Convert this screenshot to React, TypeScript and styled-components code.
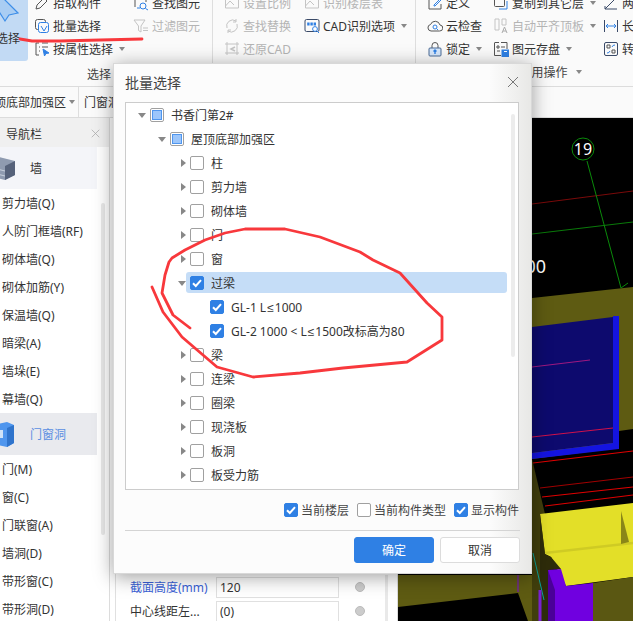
import React from "react"
import styled, { createGlobalStyle } from "styled-components"

const GlobalStyle = createGlobalStyle`
  html, body {
    margin: 0;
    padding: 0;
    background: #fff;
  }
  body {
    font-family: "Noto Sans", "Noto Sans CJK SC", sans-serif;
    font-size: 12px;
    color: #333;
  }
`

const Page = styled.div`
  position: relative;
  width: 633px;
  height: 621px;
  overflow: hidden;
  background: #fff;
`

const Ribbon = styled.header`
  display: flex;
  height: 87px;
  background: #fafafa;
  border-bottom: 1px solid #dcdcdc;
  box-sizing: border-box;
`

const Group = styled.section<{ $width: number }>`
  display: flex;
  flex-direction: column;
  flex: none;
  width: ${p => p.$width}px;
  height: 86px;
  box-sizing: border-box;
  border-right: 1px solid #dedede;
  overflow: hidden;
  &:last-child {
    border-right: 0;
  }
`

const GroupBody = styled.div`
  display: flex;
  height: 62px;
`

const GroupLabel = styled.div<{ $start?: number; $end?: number; $top?: number }>`
  display: flex;
  align-items: center;
  justify-content: center;
  gap: 6px;
  margin-top: ${p => p.$top ?? 3}px;
  padding-left: ${p => p.$start ?? 0}px;
  padding-right: ${p => p.$end ?? 0}px;
  height: 18px;
  color: #444;
`

const BigButton = styled.button`
  flex: none;
  width: 28px;
  height: 61px;
  margin: 0;
  padding: 0;
  border: 0;
  border-radius: 0 0 3px 0;
  background: #c2daf4;
  color: #333;
  font: inherit;
  overflow: hidden;
  display: flex;
  flex-direction: column;
  align-items: flex-start;
`

const BigIcon = styled.svg`
  flex: none;
  overflow: visible;
`

const BigLabel = styled.span`
  margin: 7px 0 0 -4px;
  white-space: nowrap;
`

const ToolColumn = styled.div<{ $left: number; $width: number }>`
  flex: none;
  width: ${p => p.$width}px;
  margin-left: ${p => p.$left}px;
  margin-top: -9px;
`

const Tool = styled.div<{ $off?: boolean }>`
  display: flex;
  align-items: center;
  gap: 3px;
  height: 23px;
  white-space: nowrap;
  color: ${p => (p.$off ? "#b4b4b4" : "#333")};
`

const Caret = styled.i<{ $gap?: number }>`
  display: inline-block;
  width: 0;
  height: 0;
  margin-left: ${p => p.$gap ?? 3}px;
  border-left: 3px solid transparent;
  border-right: 3px solid transparent;
  border-top: 4px solid #888;
`

const SubBar = styled.div`
  display: flex;
  align-items: center;
  height: 31px;
  box-sizing: border-box;
  background: #fafafa;
  border-bottom: 1px solid #dcdcdc;
  overflow: hidden;
`

const FloorPicker = styled.div`
  display: flex;
  align-items: center;
  flex: none;
  width: 79px;
  height: 100%;
  box-sizing: border-box;
  margin-right: 5px;
  border-right: 1px solid #dedede;
  overflow: hidden;
  white-space: nowrap;
`

const FloorName = styled.span`
  margin-left: -18px;
`

const Main = styled.div`
  display: flex;
  height: 503px;
`

const Nav = styled.nav`
  position: relative;
  flex: none;
  width: 110px;
  box-sizing: border-box;
  background: #fff;
  border-right: 1px solid #dcdcdc;
  overflow: hidden;
`

const NavHead = styled.div`
  display: flex;
  align-items: center;
  justify-content: space-between;
  height: 29px;
  padding: 2px 9px 0 6px;
  box-sizing: border-box;
  background: #f0f0f0;
`

const NavCategory = styled.div<{ $active?: boolean }>`
  display: flex;
  align-items: center;
  width: 97px;
  height: 42px;
  background: ${p => (p.$active ? "#e9eaee" : "#f4f5f9")};
  color: ${p => (p.$active ? "#5b8fe2" : "#333")};
  overflow: hidden;
`

const NavIcon = styled.svg`
  flex: none;
  width: 30px;
  height: 26px;
  margin-left: -15px;
  margin-right: 15px;
`

const NavItem = styled.div`
  height: 28px;
  line-height: 30px;
  padding-left: 2px;
  white-space: nowrap;
`

const NavScroll = styled.div`
  position: absolute;
  left: 101px;
  top: 85px;
  width: 4px;
  height: 332px;
  border-radius: 2px;
  background: #e8e8e8;
`

const PropertyPane = styled.aside`
  display: flex;
  flex: none;
  width: 283px;
  margin-left: 5px;
  box-sizing: border-box;
  padding: 457px 0 0 14px;
  background: #fff;
  border-left: 1px solid #e0e0e0;
  border-right: 1px solid #dcdcdc;
`

const PropertyRows = styled.div`
  flex: none;
  width: 255px;
`

const PropertyRow = styled.div`
  display: flex;
  align-items: center;
  height: 24px;
`

const PropertyName = styled.span<{ $blue?: boolean }>`
  flex: none;
  width: 86px;
  white-space: nowrap;
  color: ${p => (p.$blue ? "#3a5fd6" : "#333")};
`

const PropertyValue = styled.div`
  flex: none;
  width: 123px;
  height: 21px;
  line-height: 19px;
  padding-left: 3px;
  box-sizing: border-box;
  border: 1px solid #e0e0e0;
`

const Dot = styled.i`
  flex: none;
  width: 8px;
  height: 8px;
  margin-left: 16px;
  border-radius: 50%;
  background: #ccc;
  border: 1px solid #bbb;
`

const PaneScroll = styled.div`
  flex: none;
  width: 3px;
  height: 46px;
  background: #e9e9e9;
`

const Canvas = styled.div`
  flex: 1;
  background: #000;
  overflow: hidden;
`

const Scene = styled.svg`
  display: block;
  width: 235px;
  height: 503px;
`

const Dialog = styled.div`
  position: absolute;
  left: 113px;
  top: 63px;
  width: 419px;
  height: 511px;
  box-sizing: border-box;
  padding: 0 11px;
  display: flex;
  flex-direction: column;
  background: linear-gradient(90deg, #fcfcfc 0, #fcfcfc 90%, #e8e8e6 100%);
  border: 1px solid #d8d8d8;
  box-shadow: 0 3px 18px rgba(0, 0, 0, 0.38);
`

const DialogHead = styled.div`
  display: flex;
  align-items: center;
  justify-content: space-between;
  flex: none;
  height: 38px;
  box-sizing: border-box;
  padding: 0 1px 2px 0;
  font-size: 14px;
  color: #444;
`

const CloseButton = styled.button`
  display: flex;
  margin: 0;
  padding: 0;
  border: 0;
  background: none;
`

const TreeBox = styled.div`
  position: relative;
  flex: none;
  width: 394px;
  height: 388px;
  box-sizing: border-box;
  background: #fff;
  border: 1px solid #ccc;
`

const TreeRow = styled.div<{ $level: number; $selected?: boolean }>`
  position: relative;
  display: flex;
  align-items: center;
  height: 24px;
  padding-left: ${p => 24 + p.$level * 20}px;
  white-space: nowrap;
  color: #333;
  ${p =>
    p.$selected
      ? `
    &::before {
      content: "";
      position: absolute;
      left: 60px;
      top: 1px;
      width: 321px;
      height: 21px;
      border-radius: 3px;
      background: #c5ddf7;
    }
  `
      : ""}
`

const Arrow = styled.i<{ $open?: boolean }>`
  position: absolute;
  width: 0;
  height: 0;
  ${p =>
    p.$open
      ? `
    margin-left: -12px;
    border-left: 4px solid transparent;
    border-right: 4px solid transparent;
    border-top: 5px solid #888;
  `
      : `
    margin-left: -9px;
    border-top: 4px solid transparent;
    border-bottom: 4px solid transparent;
    border-left: 5px solid #888;
  `}
`

const BoxFace = styled.span<{ $state: CheckState }>`
  position: relative;
  flex: none;
  display: flex;
  align-items: center;
  justify-content: center;
  width: 14px;
  height: 14px;
  box-sizing: border-box;
  border-radius: 2px;
  border: 1px solid ${p => (p.$state === "on" ? "#2f80e4" : "#a0a0a0")};
  background: ${p => (p.$state === "on" ? "#2f80e4" : "#fff")};
`

const MixedFill = styled.i`
  width: 10px;
  height: 10px;
  box-sizing: border-box;
  background: #9cc6fb;
  border: 1px solid #4f96ee;
`

const TreeLabel = styled.span`
  position: relative;
  margin-left: 7px;
`

const LessEqual = styled.span`
  font-family: "Liberation Sans", sans-serif;
  margin: 0 1px;
`

const TreeScroll = styled.div`
  position: absolute;
  left: 385px;
  top: 11px;
  width: 4px;
  height: 243px;
  border-radius: 2px;
  background: #ececec;
`

const Filters = styled.div`
  display: flex;
  align-items: center;
  justify-content: flex-end;
  flex: none;
  height: 40px;
  padding-right: 1px;
`

const FilterItem = styled.label`
  display: flex;
  align-items: center;
  gap: 3px;
  margin-left: 8px;
  white-space: nowrap;
  color: #444;
`

const DialogFoot = styled.div`
  display: flex;
  justify-content: flex-end;
  gap: 6px;
  flex: none;
  padding-top: 6px;
  height: 43px;
  box-sizing: border-box;
  border-top: 1px solid #d4d4d4;
`

const ActionButton = styled.button<{ $primary?: boolean }>`
  width: 80px;
  height: 26px;
  margin: 0;
  padding: 0;
  border-radius: 3px;
  font: inherit;
  border: 1px solid ${p => (p.$primary ? "#2f80e4" : "#dcdcdc")};
  background: ${p => (p.$primary ? "#2f80e4" : "#fff")};
  color: ${p => (p.$primary ? "#fff" : "#333")};
`

const Markup = styled.svg`
  position: absolute;
  left: 0;
  top: 0;
  width: 633px;
  height: 621px;
  pointer-events: none;
`

type CheckState = "on" | "off" | "mixed"

const Check = ({ state }: { state: CheckState }) => (
  <BoxFace $state={state}>
    {state === "on" && (
      <svg width="12" height="12" viewBox="0 0 12 12">
        <path d="M2 6.2 L4.8 9 L10 3.2" fill="none" stroke="#fff" strokeWidth="2" />
      </svg>
    )}
    {state === "mixed" && <MixedFill />}
  </BoxFace>
)

const Ico = ({ children }: { children: React.ReactNode }) => (
  <svg width="16" height="16" viewBox="0 0 16 16" fill="none" stroke="#555" strokeWidth="1" style={{ flex: "none" }}>
    {children}
  </svg>
)

const BLUE = "#2f80e4"
const GREY = "#c4c4c4"

const icons: Record<string, React.ReactNode> = {
  pick: <path d="M2 14 L3 10 L10 3 L13 6 L6 13 Z" />,
  batch: (
    <>
      <rect x="1.5" y="1.5" width="10" height="10" rx="2" />
      <rect x="4.5" y="4.5" width="10" height="10" rx="2" stroke={BLUE} fill="#fafafa" />
      <path d="M7 8 L10 13 L13 8" stroke={BLUE} />
    </>
  ),
  attr: (
    <>
      <path d="M5 2 H2 V14 H5 M8 2 H14 M8 6 H14 M5 6 H6 M5 10 H6" />
      <path d="M9 8 L15 12 L12 12.5 L10.5 15 Z" fill={BLUE} stroke={BLUE} />
    </>
  ),
  find: (
    <>
      <path d="M2 12 V2 H13 V7" />
      <circle cx="10" cy="11" r="3" stroke={BLUE} />
      <path d="M4 13 H7 M12.5 13.5 L15 15" stroke={BLUE} />
    </>
  ),
  filter: (
    <g stroke={GREY}>
      <path d="M1 2 H12 L8 8 V14 L5.5 12.5 V8 Z" />
      <path d="M10 10 H15 M10 12.5 H15" />
    </g>
  ),
  scale: <path d="M1.5 13 V3 H14.5 V13 Z M1.5 11 L6 6 L10 10" stroke={GREY} />,
  replace: (
    <g stroke={GREY}>
      <path d="M3 10 A6 6 0 0 1 12 3" />
      <path d="M13 6 A6 6 0 0 1 4 13" />
      <path d="M12 1 V4 H9 M4 15 V12 H7" />
    </g>
  ),
  restore: (
    <g stroke={GREY}>
      <path d="M3 1 V14 M13 1 V14 M1 3 H15 M1 12 H15" />
      <path d="M11 6 L7 8 L11 10" strokeWidth="1.5" />
    </g>
  ),
  cad: (
    <>
      <rect x="1" y="1.5" width="14" height="12" rx="1.5" stroke="#3a4a68" />
      <path d="M3.2 6 H12.8" stroke={BLUE} strokeWidth="3" strokeDasharray="2.4 .8" />
      <circle cx="11" cy="11" r="2.4" stroke={BLUE} fill="#fff" />
      <path d="M13 13 L15 15" stroke={BLUE} />
    </>
  ),
  define: (
    <>
      <path d="M8 2 H2 V14 H14 V9" />
      <path d="M7 10 L14 3 L15 4 L8 11 H7 Z" stroke={BLUE} />
    </>
  ),
  cloud: (
    <>
      <path d="M4 13 H12.5 A3 3 0 0 0 13 7 A5 5 0 0 0 3.5 6.5 A3.3 3.3 0 0 0 4 13 Z" />
      <circle cx="8" cy="9" r="2" stroke={BLUE} />
      <path d="M9.5 10.5 L11 12" stroke={BLUE} />
    </>
  ),
  lock: (
    <>
      <path d="M5 7 V4.5 A3 3 0 0 1 11 4.5 V7" />
      <rect x="2" y="7" width="12" height="8" rx="1" fill="#d6e7fb" stroke="#4a6a95" />
      <path d="M8 9 V13 M6.5 10.5 L8 9 L9.5 10.5" stroke={BLUE} strokeWidth="1.4" />
    </>
  ),
  copy: (
    <>
      <rect x="1.5" y="1.5" width="10" height="10" rx="1" />
      <path d="M6 14 H14 V6" stroke={BLUE} />
    </>
  ),
  align: (
    <g stroke={GREY}>
      <path d="M2 1 H6 V12 H2 Z M9 1 H13 V7 H9 Z" />
      <path d="M9 15 L11.5 9 L14 15 M10 13 H13" stroke="#aaa" />
    </g>
  ),
  save: (
    <>
      <path d="M8 1.5 H14 V8 M2 1.5 H6 M1.5 1.5 V14.5 H8" />
      <path d="M4 5 H6 V7 H4 Z M8 6 H12 M4 10 H7" />
      <rect x="9" y="9" width="6.5" height="6.5" fill={BLUE} stroke={BLUE} />
      <path d="M11 10.5 H14" stroke="#fff" />
    </>
  ),
  twoPoint: <path d="M2 14 L13 3 M2 14 H14 M2 14 V11" stroke="#3a4a68" />,
  length: (
    <>
      <path d="M1.5 2 V14 M14.5 2 V14" stroke="#3a4a68" />
      <path d="M3 8 H13 M5 6 L3 8 L5 10 M11 6 L13 8 L11 10" stroke={BLUE} />
    </>
  ),
  turn: (
    <>
      <rect x="1.5" y="1.5" width="13" height="13" rx="1.5" stroke="#3a4a68" />
      <path d="M4 4 H7 V7 H4 Z M9 9 H12 V12 H9 Z" />
      <path d="M9 6 A3 3 0 0 1 12 4 M7 10 A3 3 0 0 1 4 12" stroke={BLUE} />
    </>
  ),
}

interface ToolDef {
  icon: string
  label: string
  off?: boolean
  caret?: boolean
}

interface ColumnDef {
  left: number
  width: number
  tools: ToolDef[]
}

const selectColumns: ColumnDef[] = [
  {
    left: 6,
    width: 99,
    tools: [
      { icon: "pick", label: "拾取构件" },
      { icon: "batch", label: "批量选择" },
      { icon: "attr", label: "按属性选择", caret: true },
    ],
  },
  {
    left: 0,
    width: 78,
    tools: [
      { icon: "find", label: "查找图元" },
      { icon: "filter", label: "过滤图元", off: true },
    ],
  },
]

const cadColumns: ColumnDef[] = [
  {
    left: 11,
    width: 80,
    tools: [
      { icon: "scale", label: "设置比例", off: true },
      { icon: "replace", label: "查找替换", off: true },
      { icon: "restore", label: "还原CAD", off: true },
    ],
  },
  {
    left: 0,
    width: 110,
    tools: [
      { icon: "scale", label: "识别楼层表", off: true },
      { icon: "cad", label: "CAD识别选项", caret: true },
    ],
  },
]

const editColumns: ColumnDef[] = [
  {
    left: 11,
    width: 66,
    tools: [
      { icon: "define", label: "定义" },
      { icon: "cloud", label: "云检查" },
      { icon: "lock", label: "锁定", caret: true },
    ],
  },
  {
    left: 0,
    width: 110,
    tools: [
      { icon: "copy", label: "复制到其它层", caret: true },
      { icon: "align", label: "自动平齐顶板", off: true, caret: true },
      { icon: "save", label: "图元存盘", caret: true },
    ],
  },
  {
    left: 0,
    width: 40,
    tools: [
      { icon: "twoPoint", label: "两点" },
      { icon: "length", label: "长度" },
      { icon: "turn", label: "转换" },
    ],
  },
]

const Columns = ({ columns }: { columns: ColumnDef[] }) => (
  <>
    {columns.map(col => (
      <ToolColumn key={col.tools[0].label} $left={col.left} $width={col.width}>
        {col.tools.map(t => (
          <Tool key={t.label} $off={t.off}>
            <Ico>{icons[t.icon]}</Ico>
            {t.label}
            {t.caret && <Caret />}
          </Tool>
        ))}
      </ToolColumn>
    ))}
  </>
)

const wallItems = ["剪力墙(Q)", "人防门框墙(RF)", "砌体墙(Q)", "砌体加筋(Y)", "保温墙(Q)", "暗梁(A)", "墙垛(E)", "幕墙(Q)"]
const openingItems = ["门(M)", "窗(C)", "门联窗(A)", "墙洞(D)", "带形窗(C)", "带形洞(D)"]

interface TreeNode {
  level: number
  label: string
  state: CheckState
  arrow?: "open" | "closed"
  selected?: boolean
}

const closed = (label: string): TreeNode => ({ level: 2, label, state: "off", arrow: "closed" })

const tree: TreeNode[] = [
  { level: 0, label: "书香门第2#", state: "mixed", arrow: "open" },
  { level: 1, label: "屋顶底部加强区", state: "mixed", arrow: "open" },
  closed("柱"),
  closed("剪力墙"),
  closed("砌体墙"),
  closed("门"),
  closed("窗"),
  { level: 2, label: "过梁", state: "on", arrow: "open", selected: true },
  { level: 3, label: "GL-1 L≤1000", state: "on" },
  { level: 3, label: "GL-2 1000 < L≤1500改标高为80", state: "on" },
  closed("梁"),
  closed("连梁"),
  closed("圈梁"),
  closed("现浇板"),
  closed("板洞"),
  closed("板受力筋"),
]

// the CJK fallback draws ≤ too wide, so it gets its own font
const labelParts = (label: string) => {
  const [before, after] = label.split("≤")
  if (after === undefined) return label
  return (
    <>
      {before}
      <LessEqual>≤</LessEqual>
      {after}
    </>
  )
}

const CloseX = ({ size, color }: { size: number; color: string }) => (
  <svg width={size} height={size} viewBox="0 0 12 12">
    <path d="M1 1 L11 11 M11 1 L1 11" stroke={color} strokeWidth="1" />
  </svg>
)

// everything in the 3d view, drawn in page coordinates
const ModelView = () => (
  <Scene viewBox="398 118 235 503">
    <path d="M398 575 H532 V298 L633 287 V429 L619 431 V448 L532 459 V621 H528 L518 593 L398 607 Z" fill="#5e5b12" />
    <path d="M532 327 L613 317 V443 L532 453 Z" fill="#0d0a6e" />
    <path d="M613 316 H619 V449 L532 459 V453 L613 443 Z" fill="#1414e0" />
    <path d="M532 367 L590 360" stroke="#a01880" />
    <path d="M532 437 L613 428" stroke="#d0104a" />
    <path d="M532 459 L533 463 L545 514 V621 H532 Z" fill="#403e0c" />
    <path d="M533 463 L633 451" stroke="#e00000" strokeWidth="1.2" />
    <path d="M540 488 L633 477" stroke="#a00000" />
    <path d="M542 497 L633 487" stroke="#e00000" strokeWidth="1.2" />
    <path d="M545 506 L633 495" stroke="#e00000" strokeWidth="1.2" />
    <path d="M540 514 L633 503 V577 L566 586 L551 557 L545 554 Z" fill="#e3df28" />
    <path d="M545 553 L633 543" stroke="#cfcb24" strokeWidth="2.5" />
    <path d="M621 511 L629 542 L621 544 Z" fill="#8a8618" />
    <path d="M540 514 L545 554 L551 557 L561 569 L548 570 V621 H540 Z" fill="#2e2c0a" />
    <path d="M548 570 L561 569 L566 586 L593 583 V621 H548 Z" fill="#7000e0" />
    <path d="M548 570 L555 590 V621 H548 Z" fill="#4a0098" />
    <path d="M593 583 L633 577 V621 H593 Z" fill="#5a5712" />
    <path d="M533 553 L544 600" stroke="#0aa098" />
    <path d="M540 590 V621" stroke="#7a20d0" strokeWidth="3" />
    <path d="M518 575 V592" stroke="#7a10d0" />
    <path d="M532 204 L633 191" stroke="#7a0a0a" />
    <path d="M532 234 L633 222" stroke="#0a7a0a" />
    <path d="M587 161 L621 288 M621 288 L628 283" stroke="#0a8a0a" />
    <circle cx="583" cy="149" r="11" fill="#000" stroke="#0a8a0a" />
    <text x="583" y="155" fill="#fff" fontSize="16" textAnchor="middle" fontFamily="Noto Sans, sans-serif">
      19
    </text>
    <text x="546" y="273" fill="#fff" fontSize="18" textAnchor="end" fontFamily="Noto Sans, sans-serif">
      100
    </text>
  </Scene>
)

const App = () => (
  <Page>
    <GlobalStyle />
    <Ribbon>
      <Group $width={213}>
        <GroupBody>
          <BigButton>
            <BigIcon width="20" height="22" viewBox="0 0 20 22">
              <path d="M-1 -6 L18 13 L9 15 L5 21 L-2 10 Z" fill="#a9cdf3" stroke="#3d8ee8" strokeWidth="1.2" />
            </BigIcon>
            <BigLabel>选择</BigLabel>
          </BigButton>
          <Columns columns={selectColumns} />
        </GroupBody>
        <GroupLabel $end={14}>选择</GroupLabel>
      </Group>
      <Group $width={203}>
        <GroupBody>
          <Columns columns={cadColumns} />
        </GroupBody>
      </Group>
      <Group $width={217}>
        <GroupBody>
          <Columns columns={editColumns} />
        </GroupBody>
        <GroupLabel $start={52} $top={1}>
          通用操作
          <Caret $gap={2} />
        </GroupLabel>
      </Group>
    </Ribbon>

    <SubBar>
      <FloorPicker>
        <FloorName>屋顶底部加强区</FloorName>
        <Caret />
      </FloorPicker>
      门窗洞
    </SubBar>

    <Main>
      <Nav>
        <NavHead>
          导航栏
          <CloseX size={9} color="#aaa" />
        </NavHead>
        <NavCategory>
          <NavIcon viewBox="0 0 30 26">
            <path d="M0 5 L10 1 L30 6 V20 L20 25 L0 20 Z" fill="#8f9bb0" />
            <path d="M20 11 L30 6 V20 L20 25 Z" fill="#56627a" />
            <path d="M0 11 L20 16 M0 16 L20 21 M8 8 V20 M14 9 V16" stroke="#c8d0dc" />
          </NavIcon>
          墙
        </NavCategory>
        {wallItems.map(item => (
          <NavItem key={item}>{item}</NavItem>
        ))}
        <NavCategory $active>
          <NavIcon viewBox="0 0 30 26">
            <path d="M2 5 L22 1 L29 4 V22 L22 26 L2 22 Z" fill="#4f96ee" />
            <path d="M22 7 L29 4 V22 L22 26 Z" fill="#2f74cc" />
            <path d="M10 9 H18 V17 H10 Z" fill="#cfe3f8" />
          </NavIcon>
          门窗洞
        </NavCategory>
        {openingItems.map(item => (
          <NavItem key={item}>{item}</NavItem>
        ))}
        <NavScroll />
      </Nav>

      <PropertyPane>
        <PropertyRows>
          <PropertyRow>
            <PropertyName $blue>截面高度(mm)</PropertyName>
            <PropertyValue>120</PropertyValue>
            <Dot />
          </PropertyRow>
          <PropertyRow>
            <PropertyName>中心线距左...</PropertyName>
            <PropertyValue>(0)</PropertyValue>
            <Dot />
          </PropertyRow>
        </PropertyRows>
        <PaneScroll />
      </PropertyPane>

      <Canvas>
        <ModelView />
      </Canvas>
    </Main>

    <Dialog>
      <DialogHead>
        批量选择
        <CloseButton>
          <CloseX size={12} color="#777" />
        </CloseButton>
      </DialogHead>
      <TreeBox>
        {tree.map(node => (
          <TreeRow key={node.label} $level={node.level} $selected={node.selected}>
            {node.arrow && <Arrow $open={node.arrow === "open"} />}
            <Check state={node.state} />
            <TreeLabel>{labelParts(node.label)}</TreeLabel>
          </TreeRow>
        ))}
        <TreeScroll />
      </TreeBox>
      <Filters>
        <FilterItem>
          <Check state="on" />
          当前楼层
        </FilterItem>
        <FilterItem>
          <Check state="off" />
          当前构件类型
        </FilterItem>
        <FilterItem>
          <Check state="on" />
          显示构件
        </FilterItem>
      </Filters>
      <DialogFoot>
        <ActionButton $primary>确定</ActionButton>
        <ActionButton>取消</ActionButton>
      </DialogFoot>
    </Dialog>

    <Markup viewBox="0 0 633 621" fill="none" stroke="#f8383c" strokeWidth="2.8" strokeLinejoin="round" strokeLinecap="round">
      <path d="M20 39 L32 41 L60 41 L100 40 L142 39" />
      <path d="M190 328 L173 315 L162 293 L165 275 L169 262 L172 258 L185 250 L205 240 L225 233 L245 229 L285 229 L320 237 L360 252 L373 260 L400 273 L427 303 L442 317 L442 340 L407 362 L343 368 L300 373 L253 377 L217 367 L182 337 L163 312 L152 287" />
    </Markup>
  </Page>
)

export default App
